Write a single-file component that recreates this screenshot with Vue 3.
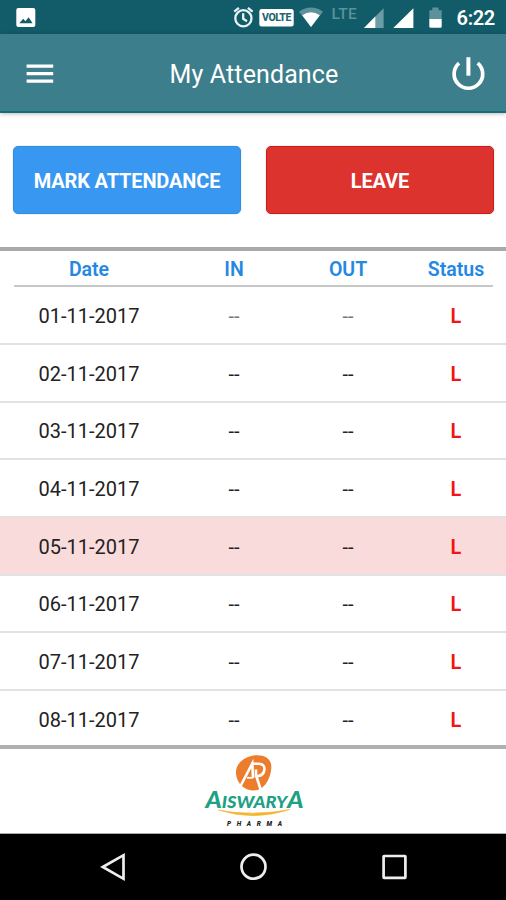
<script setup>
const days = [1, 2, 3, 4, 5, 6, 7, 8].map((d) => ({
  date: `0${d}-11-2017`,
  holiday: d === 5,
  faint: d === 1,
}))
</script>

<template>
  <div class="screen">
    <div class="statusbar">
      <svg width="506" height="34" viewBox="0 0 506 34">
        <rect x="16.3" y="8" width="19" height="19" rx="2" fill="#fff" />
        <path d="M19.3 23.2 L23.2 18.8 L25.5 21.2 L28.6 17.3 L32.6 23.2 Z" fill="#125b68" />
        <g fill="none" stroke="#e9f3f5" stroke-width="2.3">
          <circle cx="243.4" cy="18.3" r="8.1" />
          <path d="M243.2 13.2V18.8L247 21.2" />
          <path d="M234.2 11.7L238.9 7.9M252.6 11.7L247.9 7.9" />
        </g>
        <rect x="259.3" y="9" width="34.4" height="17.6" rx="2.5" fill="#fff" />
        <text class="volte" x="262" y="21.2" textLength="29.3">VOLTE</text>
        <path d="M299 11.7Q311 3.5 323 11.7L311 27Z" fill="#5c929c" />
        <path d="M302.2 15.3Q311 9.2 319.8 15.3L311 27Z" fill="#fff" />
        <text class="lte" x="331.6" y="18.6" textLength="25.2">LTE</text>
        <path d="M364 28L383.6 8.2V28Z" fill="#6b9da6" />
        <path d="M364 28L375.3 16.6V28Z" fill="#fff" />
        <path d="M393.3 28L413.4 8.2V28Z" fill="#fff" />
        <path d="M429.3 10.2H432.3V7.6H438.5V10.2H441.7V19H429.3Z" fill="#5c929c" />
        <path d="M429.3 19H441.7V26.2Q441.7 27.7 440.2 27.7H430.8Q429.3 27.7 429.3 26.2Z" fill="#fff" />
        <text class="clock" x="456.6" y="25" textLength="38.6">6:22</text>
      </svg>
    </div>

    <header class="appbar">
      <svg class="menu" width="28" height="22" viewBox="0 0 28 22">
        <path d="M.6 3.2H27.2M.6 10.7H27.2M.6 18.2H27.2" stroke="#fff" stroke-width="3.2" />
      </svg>
      <h1>My Attendance</h1>
      <svg class="power" width="36" height="36" viewBox="0 0 36 36" fill="none" stroke="#fff">
        <path d="M18.4 1.2V19.7" stroke-width="4" />
        <path d="M9.1 7.1A14.3 14.3 0 1 0 27.7 7.1" stroke-width="3.7" />
      </svg>
    </header>

    <div class="actions">
      <button class="mark">MARK ATTENDANCE</button>
      <button class="leave">LEAVE</button>
    </div>

    <section class="table">
      <div class="head">
        <div class="cells">
          <span>Date</span><span>IN</span><span>OUT</span><span>Status</span>
        </div>
      </div>
      <div
        v-for="day in days"
        :key="day.date"
        class="cells row"
        :class="{ holiday: day.holiday, faint: day.faint }"
      >
        <span>{{ day.date }}</span>
        <span class="dash">--</span>
        <span class="dash">--</span>
        <span class="status">L</span>
      </div>
    </section>

    <footer class="brand">
      <svg width="110" height="84" viewBox="0 0 110 84">
        <path d="M38 25C37 15 46 7 58 6.2C67 5.6 74 10 73.3 19C72.5 30 66 41.5 56 41.5C46 41.5 39 34 38 25Z" fill="#ec7d2c" />
        <g fill="none" stroke="#fff" stroke-width="2.6">
          <path d="M42.8 36.5L54.3 14.5L55 29" />
          <path d="M53 14.8H61Q66.8 15.2 66.4 20.5Q65.8 26.5 60 27H58V20.5" />
          <path d="M58 26L62.8 41" />
          <path d="M49 28.8H55" stroke-width="1.8" />
        </g>
        <text class="wordmark" x="7.5" y="59" textLength="98" lengthAdjust="spacingAndGlyphs"><tspan class="big">A</tspan>ISWARY<tspan class="big">A</tspan></text>
        <path d="M20 61Q54 67.5 92 60.5Q56 72.5 20 61Z" fill="#f5b52e" stroke="#f5b52e" stroke-width=".5" />
        <text class="pharma" x="29" y="76.5" textLength="55">PHARMA</text>
      </svg>
    </footer>

    <nav class="navbar">
      <svg width="506" height="66" viewBox="0 0 506 66" fill="none" stroke="#eee" stroke-width="2.7">
        <path d="M102.8 33L123.5 21.2V44.8Z" />
        <circle cx="253.5" cy="32.7" r="12" />
        <rect x="383.6" y="22" width="21.8" height="21.8" rx=".5" />
      </svg>
    </nav>
  </div>
</template>

<style>
body { margin: 0; background: #fff; }
</style>

<style scoped>
.screen {
  width: 506px;
  height: 900px;
  display: flex;
  flex-direction: column;
  overflow: hidden;
  background: #fff;
  font-family: Roboto, "Liberation Sans", sans-serif;
}
svg { display: block; flex: none; }
.statusbar { height: 34px; flex: none; background: #125b68; }
.volte { font-size: 10.5px; font-weight: 800; fill: #226371; }
.lte { font-size: 15.5px; font-weight: 500; fill: #5c929c; }
.clock { font-size: 20px; font-weight: 600; fill: #fff; }
.appbar {
  box-sizing: border-box;
  height: 79px;
  flex: none;
  display: flex;
  align-items: center;
  justify-content: space-between;
  padding: 2px 20px 0 26px;
  background: #3c7e8b;
  border-bottom: 2px solid #166e78;
  box-shadow: 0 1px 4px #0004;
}
h1 {
  margin: 3px 0 0 4px;
  font-size: 25px;
  line-height: 30px;
  font-weight: 400;
  letter-spacing: .12px;
  color: #fff;
}
.actions {
  box-sizing: border-box;
  height: 134px;
  flex: none;
  display: grid;
  grid-template-columns: 1fr 1fr;
  gap: 25px;
  padding: 33px 12.5px 33.5px;
}
button {
  border: 1px solid;
  border-radius: 5px;
  padding: 2px 0 0 1px;
  color: #fff;
  font: 700 20px/24px Roboto, sans-serif;
  letter-spacing: -.15px;
  box-shadow: 0 0 2px #0003;
}
.mark { background: #3897f0; border-color: #2c90e9; }
.leave { background: #dd332f; border-color: #d01a18; }
.table {
  box-sizing: border-box;
  height: 502px;
  flex: none;
  border-top: 4px solid #aaa;
  border-bottom: 4px solid #b0b0b0;
  overflow: hidden;
}
.head { position: relative; height: 36.4px; color: #2488e3; font-weight: 600; }
.head::after {
  content: "";
  position: absolute;
  inset: auto 13px 0 14px;
  height: 2px;
  background: #c8c8c8;
}
.cells {
  display: grid;
  grid-template-columns: 178px 112px 116px 100px;
  align-items: center;
  text-align: center;
  font-size: 20px;
  line-height: 24px;
}
.head .cells { height: 38px; font-size: 19.5px; }
.row {
  box-sizing: border-box;
  height: 57.65px;
  border-bottom: 2px solid #e2e2e2;
  color: #222;
}
.row span { padding-top: 2px; }
.holiday { background: #f9dbdb; }
.row .dash { font-size: 20px; }
.faint .dash { color: #777; }
.status { color: #f41414; font-weight: 600; }
.brand {
  box-sizing: border-box;
  height: 85px;
  flex: none;
  display: flex;
  justify-content: center;
  border-bottom: 1px solid #aaa;
}
.wordmark { font: italic 900 17px Lato, sans-serif; fill: #20a084; }
.big { font-size: 23px; }
.pharma { font: italic 900 6.5px Roboto, sans-serif; fill: #222; }
.navbar { height: 66px; flex: none; background: #000; }
</style>
